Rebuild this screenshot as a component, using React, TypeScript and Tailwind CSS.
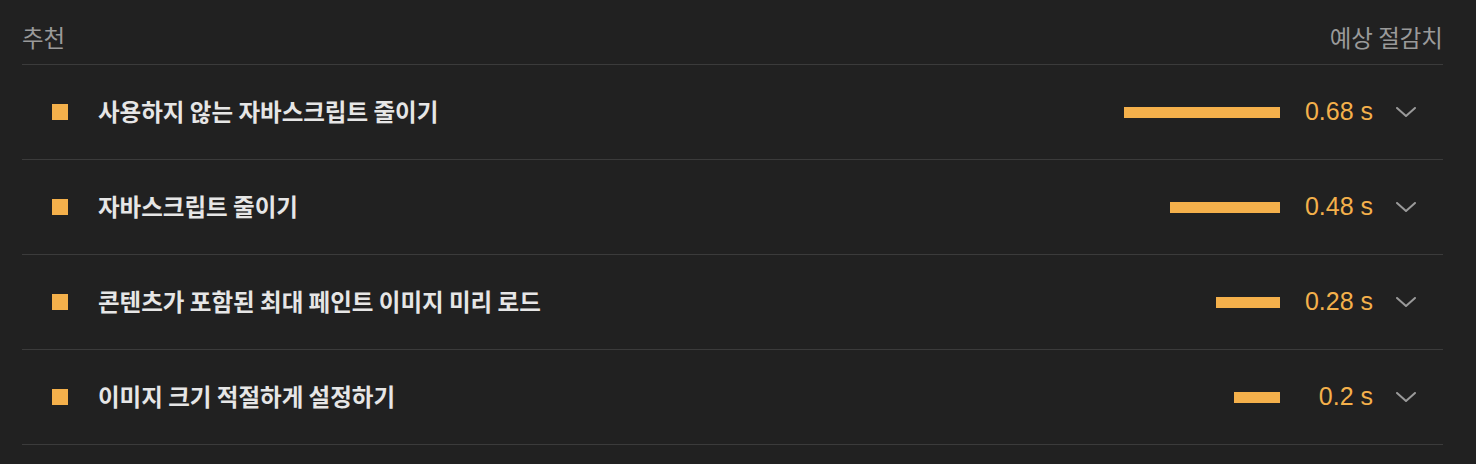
const ITEMS = [
  { title: '사용하지 않는 자바스크립트 줄이기', value: 0.68 },
  { title: '자바스크립트 줄이기', value: 0.48 },
  { title: '콘텐츠가 포함된 최대 페인트 이미지 미리 로드', value: 0.28 },
  { title: '이미지 크기 적절하게 설정하기', value: 0.2 },
];

const KR = "font-['Noto_Sans_CJK_KR','Noto_Sans',sans-serif]";

function Chevron() {
  return (
    <svg width="20" height="10" viewBox="0 0 20 10" fill="none" className="shrink-0">
      <polyline
        points="1,1 10,9 19,1"
        stroke="#9a9a9a"
        strokeWidth="2"
        strokeLinecap="round"
        strokeLinejoin="round"
      />
    </svg>
  );
}

export default function App() {
  return (
    <div className="h-[464px] w-full overflow-hidden bg-[#212121] pl-[22px] pr-[33px]">
      <div className={`flex items-center justify-between pt-[23px] pb-[13px] text-[23.5px] leading-[28px] text-[#9a9a9a] ${KR}`}>
        <span>추천</span>
        <span>예상 절감치</span>
      </div>

      <div className="border-t border-[#3b3b3b]">
        {ITEMS.map((item) => (
          <div
            key={item.title}
            className="flex h-[95px] items-center border-b border-[#3b3b3b] pl-[30px] pr-[27px]"
          >
            <div className="h-[16px] w-[16px] shrink-0 bg-[#f4b04b]" />
            <div className={`ml-[30px] flex-1 text-[23.5px] font-semibold text-[#e6e6e6] ${KR}`}>
              {item.title}
            </div>
            <div
              className="h-[11px] bg-[#f4b04b]"
              style={{ width: `${Math.round(item.value * 229)}px` }}
            />
            <div className="w-[93px] text-right font-['Liberation_Sans',Arial,sans-serif] text-[25px] text-[#f4b04b]">
              {item.value} s
            </div>
            <div className="ml-[23px]">
              <Chevron />
            </div>
          </div>
        ))}
      </div>
    </div>
  );
}
